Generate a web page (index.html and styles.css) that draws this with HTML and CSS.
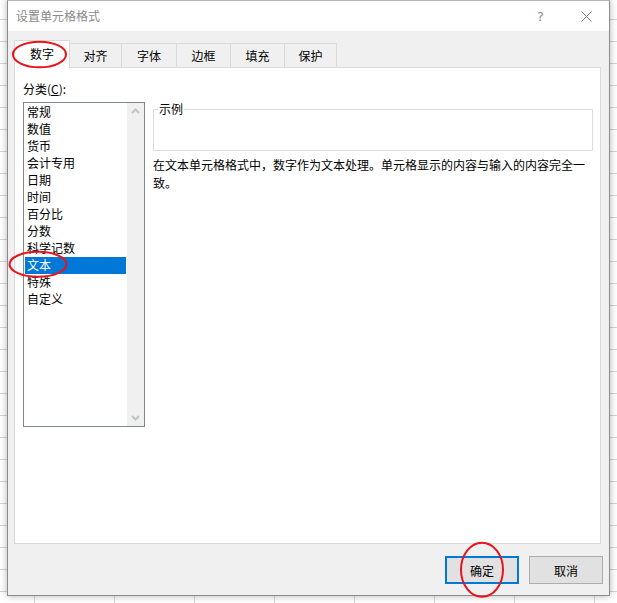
FILE: index.html
```html
<!DOCTYPE html>
<html lang="zh-CN">
<head>
    <meta charset="UTF-8">
    <title>设置单元格格式</title>
    <link rel="stylesheet" href="styles.css">
</head>
<body>
    <div class="dialog">
        <div class="title-bar">
            <span class="title">设置单元格格式</span>
            <span class="help">?</span>
            <span class="close">
                <svg width="11" height="11" viewBox="0 0 11 11">
                    <path d="M0.5 0.5 L10.5 10.5 M10.5 0.5 L0.5 10.5" stroke="#777" stroke-width="1" fill="none"/>
                </svg>
            </span>
        </div>

        <div class="dialog-body">
            <div class="tabs">
                <div class="tab tab-active tab-w56">数字</div>
                <div class="tab tab-w52">对齐</div>
                <div class="tab tab-w55">字体</div>
                <div class="tab tab-w54">边框</div>
                <div class="tab tab-w54">填充</div>
                <div class="tab tab-w52">保护</div>
            </div>

            <div class="panel">
                <div class="category">
                    <div class="field-label">分类(<u>C</u>):</div>
                    <div class="listbox">
                        <ul class="list-items">
                            <li>常规</li>
                            <li>数值</li>
                            <li>货币</li>
                            <li>会计专用</li>
                            <li>日期</li>
                            <li>时间</li>
                            <li>百分比</li>
                            <li>分数</li>
                            <li>科学记数</li>
                            <li class="selected">文本</li>
                            <li>特殊</li>
                            <li>自定义</li>
                        </ul>
                        <div class="scrollbar">
                            <svg class="arrow" width="17" height="17" viewBox="0 0 17 17">
                                <path d="M5 10 L8.5 6.5 L12 10" stroke="#c2c2c2" stroke-width="2" fill="none"/>
                            </svg>
                            <svg class="arrow" width="17" height="17" viewBox="0 0 17 17">
                                <path d="M5 7 L8.5 10.5 L12 7" stroke="#c2c2c2" stroke-width="2" fill="none"/>
                            </svg>
                        </div>
                    </div>
                </div>

                <div class="details">
                    <div class="sample">
                        <div class="sample-label">示例</div>
                    </div>
                    <p class="description">在文本单元格格式中，数字作为文本处理。单元格显示的内容与输入的内容完全一致。</p>
                </div>
            </div>

            <div class="footer">
                <button class="btn btn-default">确定</button>
                <button class="btn">取消</button>
            </div>
        </div>
    </div>

    <!-- red marks drawn over the screenshot -->
    <svg class="annotations" width="617" height="603" viewBox="0 0 617 603">
        <ellipse cx="39.5" cy="54.5" rx="26.5" ry="12.8" fill="none" stroke="#e8141b" stroke-width="2"/>
        <ellipse cx="38" cy="264.3" rx="28.5" ry="12.5" fill="none" stroke="#e8141b" stroke-width="2"/>
        <ellipse cx="482" cy="569.7" rx="21" ry="27" fill="none" stroke="#e8141b" stroke-width="2"/>
    </svg>
</body>
</html>
```

FILE: styles.css
```css
body {
    margin: 0;
    width: 617px;
    height: 603px;
    overflow: hidden;
    position: relative;
    font-family: "Noto Sans CJK SC", "Noto Sans", sans-serif;
    font-size: 12px;
    color: #000;
    background-color: #ffffff;
    /* spreadsheet grid behind the dialog */
    background-image:
        linear-gradient(to right, #d4d4d4 1px, transparent 1px),
        linear-gradient(to bottom, #d4d4d4 1px, transparent 1px);
    background-size: 80px 100%, 100% 22px;
    background-position: 34px 0, 0 19px;
}

.dialog {
    margin-left: 7px;
    width: 603px;
    height: 596px;
    box-sizing: border-box;
    border: 1px solid #8c8c8c;
    border-top-color: #b4b4b4;
    background-color: #f0f0f0;
    box-shadow: 0 0 7px rgba(0, 0, 0, 0.3);
    display: flex;
    flex-direction: column;
}

.title-bar {
    height: 30px;
    background-color: #ffffff;
    display: flex;
    align-items: center;
    padding-left: 8px;
}

.title {
    flex: 1;
    color: #8a8a8a;
    line-height: 14px;
}

.help {
    width: 45px;
    text-align: center;
    color: #8a8a8a;
    font-family: "DejaVu Sans", sans-serif;
    font-size: 13px;
    margin-top: 1px;
}

.close {
    width: 46px;
    height: 30px;
    display: flex;
    align-items: center;
    justify-content: center;
}

.dialog-body {
    flex: 1;
    padding: 9px 8px 0 6px;
    display: flex;
    flex-direction: column;
}

.tabs {
    display: flex;
    align-items: flex-end;
    height: 27px;
}

.tab {
    height: 24px;
    box-sizing: border-box;
    border-top: 1px solid #d9d9d9;
    border-right: 1px solid #d9d9d9;
    display: flex;
    align-items: center;
    justify-content: center;
    padding-bottom: 1px;
}

.tab-active {
    height: 28px;
    margin-bottom: -1px;
    border-left: 1px solid #d9d9d9;
    background-color: #ffffff;
    position: relative;
    z-index: 1;
    padding-bottom: 3px;
}

.tab-w56 { width: 56px; }
.tab-w55 { width: 55px; }
.tab-w54 { width: 54px; }
.tab-w52 { width: 52px; }

.panel {
    height: 477px;
    box-sizing: border-box;
    border: 1px solid #d9d9d9;
    background-color: #ffffff;
    display: flex;
    padding: 13px 7px 0 8px;
}

.category {
    width: 122px;
}

.field-label {
    line-height: 16px;
    margin-bottom: 5px;
}

.field-label u {
    text-underline-offset: 1px;
}

.listbox {
    height: 325px;
    box-sizing: border-box;
    border: 1px solid #828790;
    display: flex;
}

.list-items {
    flex: 1;
    list-style: none;
    margin: 0;
    padding: 1px;
}

.list-items li {
    height: 17px;
    box-sizing: border-box;
    line-height: 15px;
    padding: 0 0 2px 2px;
    white-space: nowrap;
}

.list-items li.selected {
    background-color: #0078d7;
    color: #ffffff;
}

.scrollbar {
    width: 17px;
    background-color: #f0f0f0;
    display: flex;
    flex-direction: column;
    justify-content: space-between;
}

.arrow {
    display: block;
}

.details {
    flex: 1;
    margin-left: 8px;
    padding-top: 28px;
}

.sample {
    height: 42px;
    box-sizing: border-box;
    border: 1px solid #dcdcdc;
}

.sample-label {
    width: fit-content;
    margin: -8px 0 0 4px;
    padding: 0 1px;
    background-color: #ffffff;
    line-height: 14px;
}

.description {
    margin: 5px 0 0;
    line-height: 18px;
}

.footer {
    display: flex;
    justify-content: flex-end;
    gap: 10px;
    margin-top: 12px;
    margin-right: -2px;
}

.btn {
    width: 74px;
    height: 28px;
    box-sizing: border-box;
    border: 1px solid #adadad;
    background-color: #e1e1e1;
    font-family: inherit;
    font-size: 12px;
    color: #000;
    padding: 0;
}

.btn-default {
    border: 2px solid #0078d7;
}

.annotations {
    position: absolute;
    top: 0;
    left: 0;
    z-index: 2;
    pointer-events: none;
}
```
